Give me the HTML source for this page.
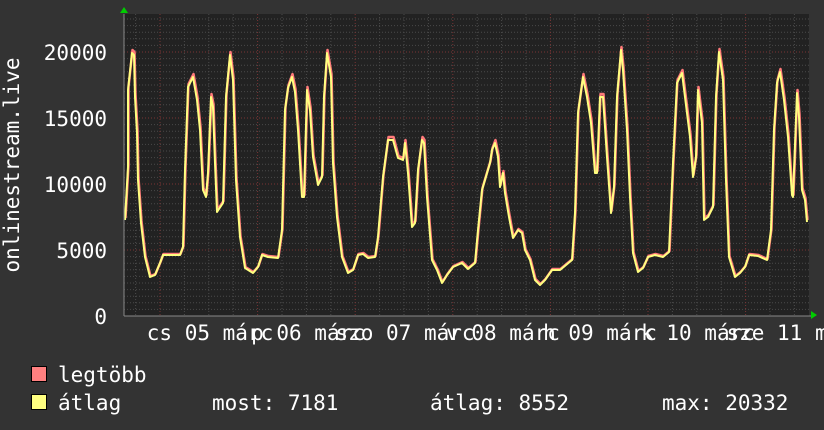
<!DOCTYPE html>
<html><head><meta charset="utf-8"><style>
html,body{margin:0;padding:0;background:#333333;}
svg{display:block;}
text{font-family:"DejaVu Sans Mono","Liberation Mono",monospace;fill:#ffffff;font-size:21px;}
</style></head><body>
<svg id="s" width="824" height="430" xmlns="http://www.w3.org/2000/svg">
<rect x="0" y="0" width="824" height="430" fill="#333333"/>
<rect x="124" y="14" width="685" height="302" fill="#222222"/>
<g id="grid"></g>
<polyline id="red" fill="none" stroke="#ff7a7a" stroke-width="2.5" stroke-linejoin="round"/>
<polyline id="yel" fill="none" stroke="#ffff80" stroke-width="2" stroke-linejoin="round"/>
<line x1="124" y1="316" x2="812" y2="316" stroke="#888" stroke-width="1"/>
<line x1="124" y1="14" x2="124" y2="316" stroke="#888" stroke-width="1"/>
<polygon points="120,13 128,13 124,7" fill="#00cc00"/>
<polygon points="811,311 811,319 817,315" fill="#00cc00"/>
<text x="107" y="60" text-anchor="end">20000</text>
<text x="107" y="126" text-anchor="end">15000</text>
<text x="107" y="192" text-anchor="end">10000</text>
<text x="107" y="258" text-anchor="end">5000</text>
<text x="107" y="324" text-anchor="end">0</text>
<text transform="translate(19,165) rotate(-90)" text-anchor="middle">onlinestream.live</text>
<text x="210" y="340" text-anchor="middle">cs 05 márc</text>
<text x="308" y="340" text-anchor="middle">p 06 márc</text>
<text x="405" y="340" text-anchor="middle">szo 07 márc</text>
<text x="503" y="340" text-anchor="middle">v 08 márc</text>
<text x="600" y="340" text-anchor="middle">h 09 márc</text>
<text x="698" y="340" text-anchor="middle">k 10 márc</text>
<text x="796" y="340" text-anchor="middle">sze 11 márc</text>
<rect x="31.5" y="366.5" width="15" height="15" fill="#ff8080" stroke="#000" stroke-width="1"/>
<rect x="31.5" y="394.5" width="15" height="15" fill="#ffff80" stroke="#000" stroke-width="1"/>
<text x="58" y="382">legtöbb</text>
<text x="58" y="410">átlag</text>
<text x="212" y="410">most: 7181</text>
<text x="430" y="410">átlag: 8552</text>
<text x="662" y="410">max: 20332</text>
</svg>
<script>
var g='';
for(var k=1;k<=45;k++){var y=316-6.6*k;var maj=(k%10==0);
g+='<line x1="124" x2="809" y1="'+y+'" y2="'+y+'" stroke="'+(maj?'#7a3434':'#4a4a4a')+'" stroke-width="1" stroke-dasharray="1,2"/>';}
for(var i=-1;i<29;i++){var x=160+24.4*i;if(x<126||x>808)continue;var maj=(i%4==0);
g+='<line y1="14" y2="316" x1="'+x+'" x2="'+x+'" stroke="'+(maj?'#7a3434':'#4a4a4a')+'" stroke-width="1" stroke-dasharray="1,2"/>';}
document.getElementById('grid').innerHTML=g;
var p=[125,220,128,167,128,90,132,53,134,55,135,97,137,133,138,180,141,223,145,257,150,277,155,275,160,263,163,255,180,255,183,247,185,170,188,87,193,77,197,100,200,130,203,190,206,197,208,173,211,97,213,107,215,163,217,212,223,203,226,97,230,55,233,80,236,180,240,237,245,268,253,273,258,267,262,255,268,257,278,258,282,230,285,110,288,88,292,77,295,92,298,130,302,197,304,197,307,90,310,110,313,157,318,185,322,177,324,97,327,53,331,77,333,163,337,217,342,257,348,273,353,270,358,255,363,254,368,258,375,257,378,237,383,177,388,140,393,140,398,158,403,160,405,143,408,173,412,227,415,223,418,170,422,140,424,143,427,197,432,260,437,270,442,283,447,275,453,267,462,263,468,269,475,263,478,230,482,190,487,173,490,163,492,150,495,143,498,157,500,187,503,173,505,193,509,217,513,238,518,230,522,233,525,250,530,260,535,280,540,285,545,280,552,270,560,270,572,260,575,213,578,113,583,77,587,97,591,123,595,173,597,173,600,97,603,97,607,157,611,213,614,187,617,97,621,50,623,70,627,130,630,197,633,253,638,272,643,268,648,257,655,255,663,257,669,252,673,163,677,83,682,73,685,97,690,137,693,177,696,157,698,90,702,123,704,220,708,217,713,207,716,97,719,52,723,80,726,180,729,257,735,277,740,273,745,267,749,255,758,256,767,260,771,230,774,130,777,83,780,72,784,100,788,137,792,195,793,197,797,93,799,117,802,190,805,200,807,222];
var a='',b='';
for(var j=0;j<p.length;j+=2){var y=p[j+1];var d=y<150?3:(y<230?2:1);a+=p[j]+','+y+' ';b+=(p[j]+0.5)+','+(y-d)+' ';}
document.getElementById('yel').setAttribute('points',a);
document.getElementById('red').setAttribute('points',b);
</script>
</body></html>
